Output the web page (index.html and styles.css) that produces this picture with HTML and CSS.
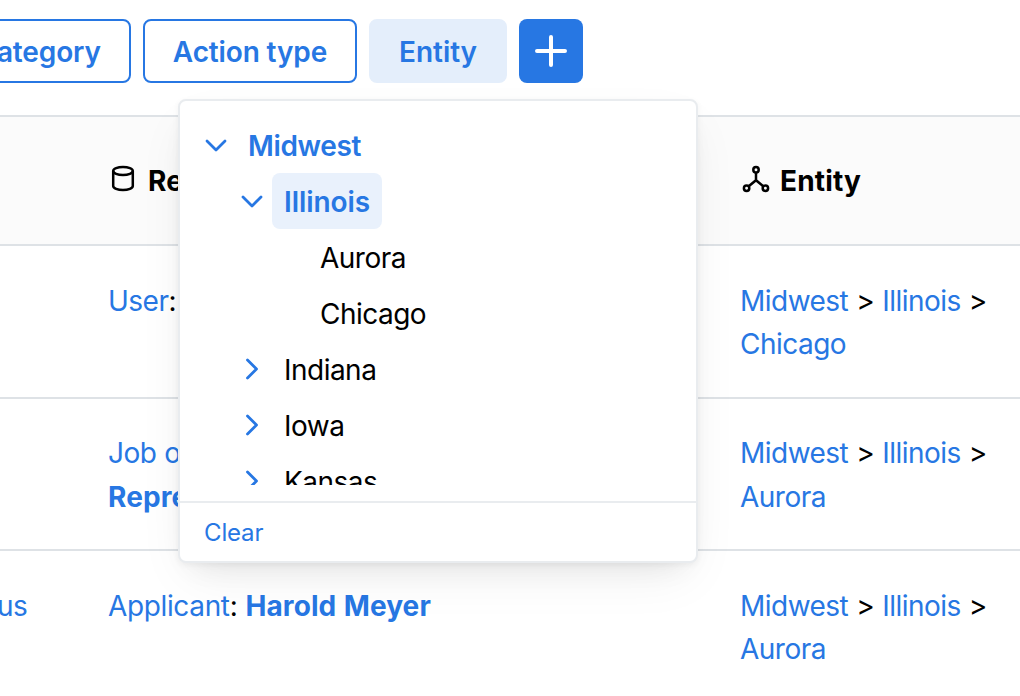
FILE: index.html
```
<!DOCTYPE html>
<html lang="en">
<head>
<meta charset="utf-8">
<title>Activity log</title>
<link rel="stylesheet" href="styles.css">
</head>
<body>
<main class="page">
  <div class="filters">
    <button class="filter">Category</button>
    <button class="filter">Action type</button>
    <button class="filter filter-active">Entity</button>
    <button class="add" aria-label="Add filter">
      <svg width="64" height="64" viewBox="0 0 64 64"><path d="M32 18v28M18 32h28"/></svg>
    </button>
  </div>

  <section class="table">
    <div class="row head">
      <div class="cell"></div>
      <div class="cell title">
        <svg class="icon" width="30" height="30" viewBox="0 0 30 30"><ellipse cx="15" cy="7" rx="9.8" ry="4"/><path d="M5.2 7v15c0 2.2 4.4 4 9.8 4s9.8-1.800 9.8-4V7"/></svg>
        <span>Re</span>
      </div>
      <div class="cell title">
        <svg class="icon" width="30" height="30" viewBox="0 0 30 30"><ellipse cx="16" cy="5.800" rx="2.700" ry="2.800"/><circle cx="6.600" cy="24.200" r="2.700"/><circle cx="25.400" cy="24.200" r="2.700"/><path d="M16 8.600v7.600M8.700 22.200l7.300-6 7.300 6"/></svg>
        <span>Entity</span>
      </div>
    </div>
    <div class="row">
      <div class="cell"></div>
      <div class="cell"><a>User</a>:</div>
      <div class="cell"><a>Midwest</a> &gt; <a>Illinois</a> &gt;<br><a>Chicago</a></div>
    </div>
    <div class="row">
      <div class="cell"></div>
      <div class="cell"><a>Job o</a><br><a class="strong">Repre</a></div>
      <div class="cell"><a>Midwest</a> &gt; <a>Illinois</a> &gt;<br><a>Aurora</a></div>
    </div>
    <div class="row">
      <div class="cell lead"><a>us</a></div>
      <div class="cell subject"><a>Applicant</a>: <a class="strong">Harold Meyer</a></div>
      <div class="cell"><a>Midwest</a> &gt; <a>Illinois</a> &gt;<br><a>Aurora</a></div>
    </div>
  </section>

  <div class="popover">
    <div class="tree">
      <div class="node">
        <svg class="chevron" viewBox="0 0 24 24"><path d="M3 8l9 9 9-9"/></svg>
        <span class="label picked">Midwest</span>
      </div>
      <div class="node level-2">
        <svg class="chevron" viewBox="0 0 24 24"><path d="M3 8l9 9 9-9"/></svg>
        <span class="label picked current">Illinois</span>
      </div>
      <div class="node level-3"><span class="label">Aurora</span></div>
      <div class="node level-3"><span class="label">Chicago</span></div>
      <div class="node level-2">
        <svg class="chevron" viewBox="0 0 24 24"><path d="M7.500 3l9 9-9 9"/></svg>
        <span class="label">Indiana</span>
      </div>
      <div class="node level-2">
        <svg class="chevron" viewBox="0 0 24 24"><path d="M7.500 3l9 9-9 9"/></svg>
        <span class="label">Iowa</span>
      </div>
      <div class="node level-2">
        <svg class="chevron" viewBox="0 0 24 24"><path d="M7.500 3l9 9-9 9"/></svg>
        <span class="label">Kansas</span>
      </div>
    </div>
    <div class="footer"><a>Clear</a></div>
  </div>
</main>
</body>
</html>
```
FILE: styles.css
```
* { box-sizing: border-box; }

body {
  margin: 0;
  background: #fff;
  color: #000;
  font: 400 28px/43.75px Inter, "Liberation Sans", sans-serif;
  font-feature-settings: "calt" 0;
  font-optical-sizing: none;
  letter-spacing: -0.52px;
  word-spacing: 0.6px;
}

.page {
  position: relative;
  width: 1020px;
  height: 696px;
  overflow: hidden;
}

a { color: #2777e3; }

.strong {
  font-weight: 700;
  letter-spacing: 0.1px;
}

.filters {
  display: flex;
  justify-content: flex-end;
  gap: 12px;
  width: 583px;
  height: 115px;
  padding-top: 19px;
}

.filter {
  flex: none;
  height: 64px;
  padding: 2px 28px 0;
  border: 2px solid #2777e3;
  border-radius: 8px;
  background: #fff;
  color: #2777e3;
  font: 600 28px/44px Inter, "Liberation Sans", sans-serif;
  letter-spacing: -0.13px;
}

.filter-active {
  border-color: #e4eefb;
  background: #e4eefb;
  letter-spacing: -0.06px;
}

.add {
  flex: none;
  width: 64px;
  height: 64px;
  padding: 0;
  border: 0;
  border-radius: 8px;
  background: #2777e3;
}

.add svg {
  display: block;
  fill: none;
  stroke: #fff;
  stroke-width: 4;
  stroke-linecap: round;
}

.row {
  display: grid;
  grid-template-columns: 108px 632px 280px;
  height: 152.5px;
  padding-top: 33.5px;
  border-bottom: 2px solid #dee2e6;
}

.head {
  height: 131px;
  padding: 0;
  align-items: center;
  border-top: 2px solid #dee2e6;
  background: #fbfbfb;
}

.cell { white-space: nowrap; }
.lead { margin-left: -3px; }
.subject { letter-spacing: -0.36px; }

.title {
  display: flex;
  align-items: center;
  gap: 10px;
  padding-top: 2px;
  font-weight: 700;
  letter-spacing: 0.15px;
}

.icon {
  margin-top: -5px;
  fill: none;
  stroke: #000;
  stroke-width: 2.5;
}

.popover {
  position: absolute;
  left: 178px;
  top: 99px;
  width: 520px;
  height: 464px;
  border: 2px solid #e9ecef;
  border-radius: 8px;
  background: #fff;
  box-shadow: 0 2px 6px rgba(0, 0, 0, 0.05), 0 20px 50px -10px rgba(0, 0, 0, 0.07), 0 14px 28px -14px rgba(0, 0, 0, 0.09);
}

.tree {
  height: 384px;
  padding: 16px 12px 0;
  overflow: hidden;
}

.node {
  display: flex;
  align-items: center;
  gap: 8px;
  height: 56px;
  padding-left: 12px;
}

.level-2 { padding-left: 48px; }
.level-3 { padding-left: 116px; }

.chevron {
  flex: none;
  width: 24px;
  height: 24px;
  fill: none;
  stroke: #2777e3;
  stroke-width: 2.8;
  stroke-linecap: round;
  stroke-linejoin: round;
}

.label {
  height: 56px;
  padding: 1px 12px 0;
  border-radius: 8px;
  line-height: 57px;
}

.picked {
  color: #2777e3;
  font-weight: 600;
  letter-spacing: -0.35px;
}

.current {
  background: #e9f1fc;
  letter-spacing: -0.08px;
}

.footer {
  height: 60px;
  margin-top: 16px;
  padding-left: 24px;
  border-top: 2px solid #e9ecef;
  font-size: 24px;
  line-height: 60px;
  letter-spacing: -0.15px;
}
```
